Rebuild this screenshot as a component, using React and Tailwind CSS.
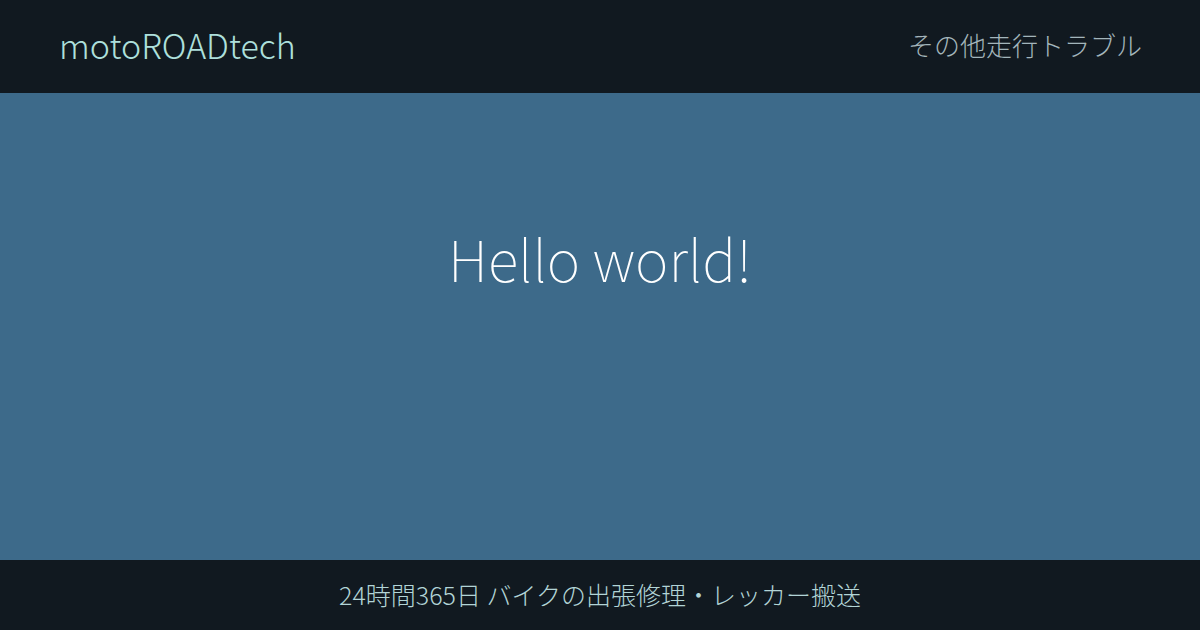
export default function App() {
  return (
    <div
      className="flex h-[630px] w-[1200px] flex-col bg-[#3d6a8a]"
      style={{ fontFamily: '"Noto Sans CJK JP", "Noto Sans", sans-serif' }}
    >
      {/* Header */}
      <header className="flex h-[93px] items-center justify-between bg-[#111920] pb-[4px] pl-[59px] pr-[58px]">
        <span className="text-[34px] font-extralight text-[#aee0dc]">motoROADtech</span>
        <span className="text-[26px] font-extralight text-[#a3b5bb]">その他走行トラブル</span>
      </header>

      {/* Main */}
      <main className="flex flex-1 justify-center pt-[122px]">
        <h1 className="text-[57px] font-thin leading-[84px] text-white">Hello world!</h1>
      </main>

      {/* Footer */}
      <footer className="flex h-[70px] items-center justify-center bg-[#111920]">
        <span className="text-[25px] font-extralight text-[#b2d4d6]">
          24時間365日 バイクの出張修理・レッカー搬送
        </span>
      </footer>
    </div>
  );
}
